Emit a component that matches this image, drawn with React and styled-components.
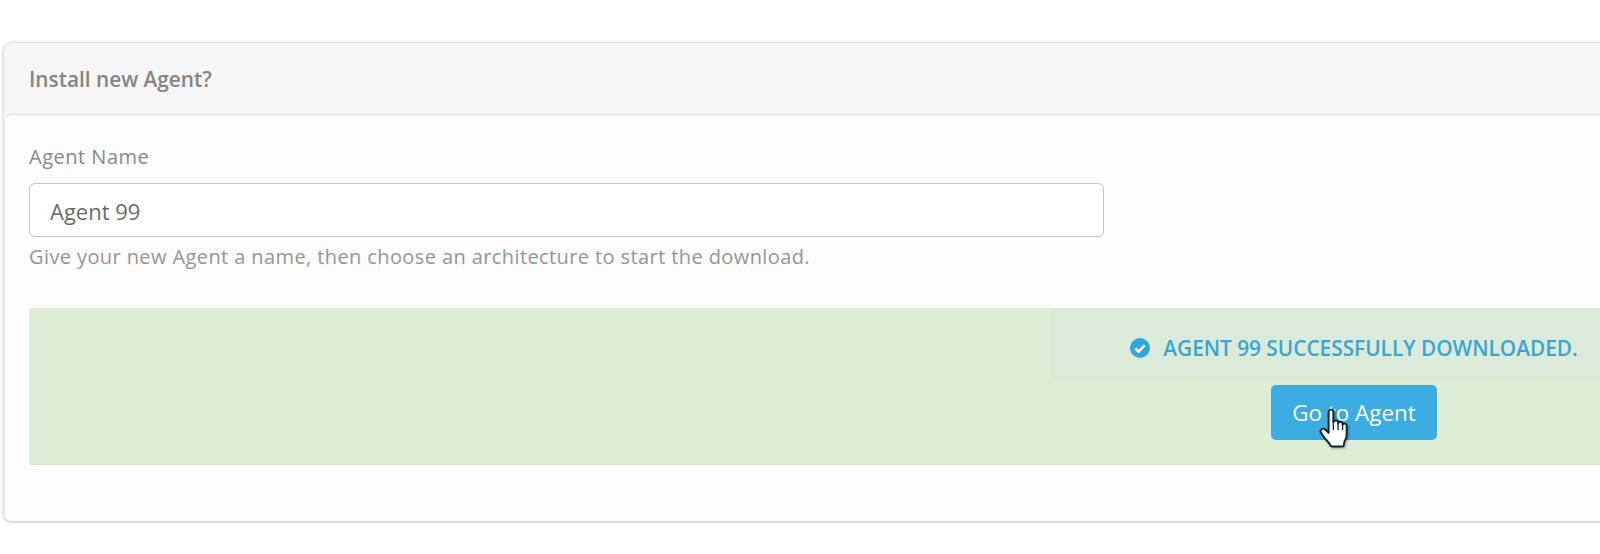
import React from "react";
import styled, { createGlobalStyle } from "styled-components";

const GlobalStyle = createGlobalStyle`
  html, body {
    margin: 0;
    padding: 0;
    background: #fff;
    overflow: hidden;
  }
  body {
    font-family: "Open Sans", "Noto Sans", sans-serif;
  }
`;

const Page = styled.div`
  width: 1600px;
  height: 554px;
  overflow: hidden;
  padding: 43px 0 0 4px;
  box-sizing: border-box;
`;

const Card = styled.section`
  width: 1679px;
  height: 478px;
  box-sizing: border-box;
  background: #f6f6f6;
  border-radius: 7px;
  box-shadow: 0 0 4px rgba(0, 0, 0, 0.2), 0 1px 3px rgba(0, 0, 0, 0.14);
  display: flex;
  flex-direction: column;
`;

const CardHeader = styled.header`
  height: 71px;
  flex: none;
  display: flex;
  align-items: center;
  padding-left: 25px;
  font-size: 20.8px;
  font-weight: 600;
  color: #858585;
`;

const CardBody = styled.div`
  flex: 1;
  background: #fcfcfc;
  border-top: 1px solid #dedede;
  border-left: 1px solid #f0f0f0;
  border-radius: 7px 0 7px 7px;
  padding: 29px 26px 0 24px;
`;

const Label = styled.label`
  display: block;
  font-size: 20px;
  letter-spacing: 0.5px;
  line-height: 26px;
  color: #8a8a8a;
  margin-bottom: 13px;
`;

const NameInput = styled.input`
  display: block;
  width: 1075px;
  height: 54px;
  box-sizing: border-box;
  padding: 2px 20px 0;
  border: 1px solid #c4c4c4;
  border-radius: 6px;
  background: #fff;
  font-family: inherit;
  font-size: 22px;
  color: #6a6a6a;
  outline: none;
`;

const Hint = styled.p`
  margin: 7px 0 0;
  font-size: 20px;
  letter-spacing: 0.4px;
  line-height: 26px;
  color: #969696;
`;

const Banner = styled.div`
  margin-top: 38px;
  height: 157px;
  background: #deeed6;
  border-bottom: 1px solid #d2e4c9;
  border-radius: 4px 0 0 4px;
  box-sizing: border-box;
  display: flex;
  justify-content: flex-end;
`;

const BannerColumn = styled.div`
  width: 606px;
  display: flex;
  flex-direction: column;
  align-items: center;
`;

const Message = styled.div`
  align-self: stretch;
  height: 72px;
  flex: none;
  box-sizing: border-box;
  padding-top: 8px;
  background: #dcead9;
  display: flex;
  align-items: center;
  justify-content: center;
  gap: 13px;
  font-size: 20.8px;
  font-weight: 600;
  color: #39a6d4;
  text-transform: uppercase;
`;

const CheckBadge = styled.svg`
  width: 20px;
  height: 20px;
  flex: none;
`;

const ButtonWrap = styled.div`
  position: relative;
  margin-top: 5px;
`;

const Button = styled.button`
  display: block;
  width: 166px;
  height: 55px;
  border: none;
  border-radius: 5px;
  background: #3bade2;
  color: #fff;
  font-family: inherit;
  font-size: 22.4px;
  padding: 0;
`;

const Cursor = styled.svg`
  position: absolute;
  left: 48px;
  top: 23px;
  width: 30px;
  height: 42px;
  pointer-events: none;
  filter: drop-shadow(1px 1px 1px rgba(0, 0, 0, 0.35));
`;

const App = () => (
  <>
    <GlobalStyle />
    <Page>
      <Card>
        <CardHeader>Install new Agent?</CardHeader>
        <CardBody>
          <Label htmlFor="agent-name">Agent Name</Label>
          <NameInput id="agent-name" defaultValue="Agent 99" />
          <Hint>Give your new Agent a name, then choose an architecture to start the download.</Hint>
          <Banner>
            <BannerColumn>
              <Message>
                <CheckBadge viewBox="0 0 20 20">
                  <circle cx="10" cy="10" r="10" fill="#2fa6dc" />
                  <path d="M5.4 10.4l3.2 3.2 6-6.2" fill="none" stroke="#fff" strokeWidth="2.6" />
                </CheckBadge>
                Agent 99 successfully downloaded.
              </Message>
              <ButtonWrap>
                <Button>Go to Agent</Button>
                <Cursor viewBox="0 0 28 38">
                  <path
                    d="M9 3.2c0-3 4.4-3 4.4 0v9.6c.2-2.4 4.2-2.4 4.4 0v1c.3-2.2 4-2.2 4.2.2v1.2c.4-1.800 3.800-1.600 3.800.8v8.500c0 2-.6 3.600-1.600 5.200-.7 1.200-1 2.400-1 4.200 0 .9-.5 1.400-1.400 1.400H12.400c-1 0-1.500-.4-1.900-1.300-1-2-2.600-3.600-4.400-5.600-1.600-1.800-3-3.900-4.300-6.100-1.500-2.600 1.800-4.800 4-2.800l3.200 3.100Z"
                    fill="#fff"
                    stroke="#12263a"
                    strokeWidth="1.8"
                    strokeLinejoin="round"
                  />
                  <path d="M13.400 13v7M17.800 14v6M22 15.400V20" fill="none" stroke="#12263a" strokeWidth="1.200" />
                </Cursor>
              </ButtonWrap>
            </BannerColumn>
          </Banner>
        </CardBody>
      </Card>
    </Page>
  </>
);

export default App;
